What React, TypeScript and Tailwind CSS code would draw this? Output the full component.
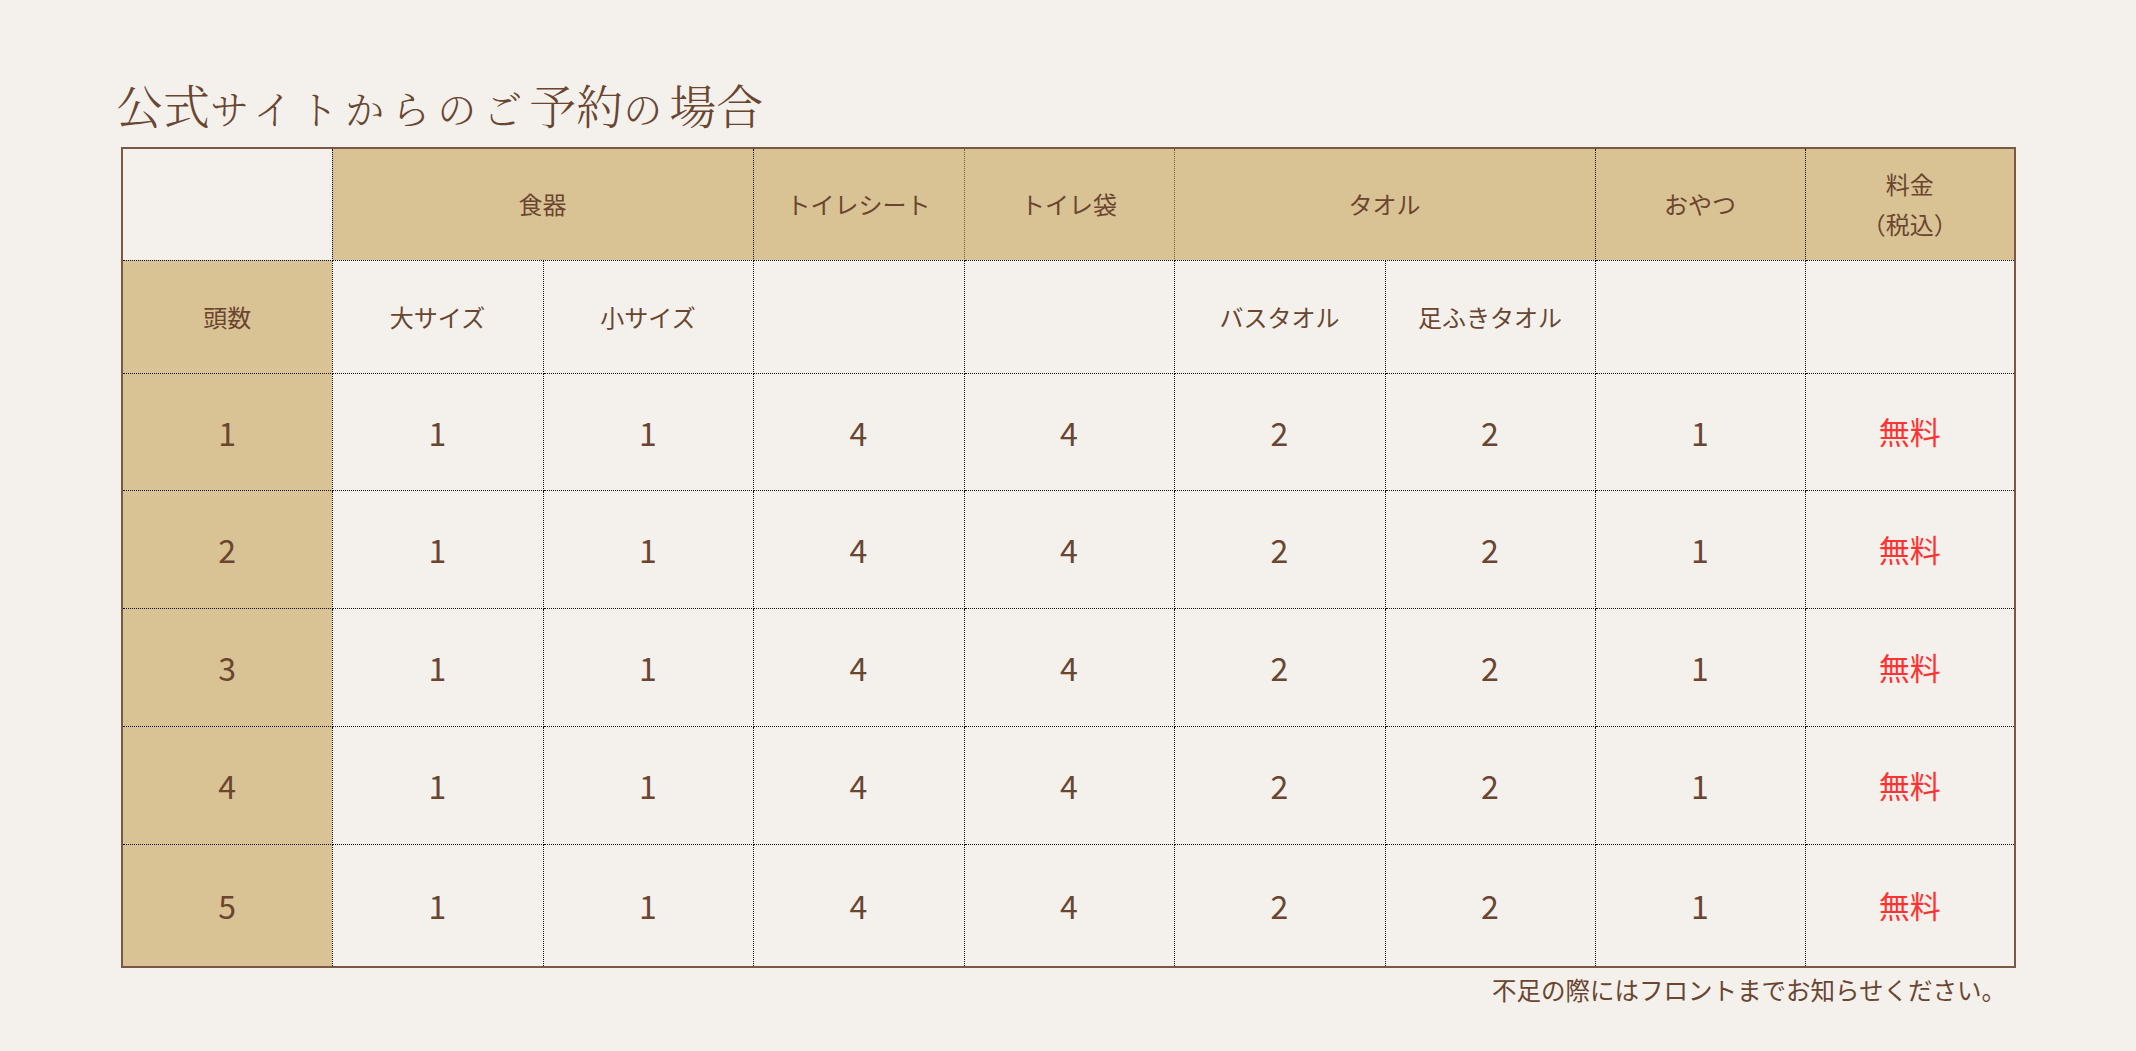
const cols = ["w-[210px]", "w-[211px]", "w-[210px]", "w-[211px]", "w-[210px]", "w-[211px]", "w-[210px]", "w-[210px]", "w-[210px]"];

const rows = [
  { n: 1, h: "h-[117px]" },
  { n: 2, h: "h-[118px]" },
  { n: 3, h: "h-[118px]" },
  { n: 4, h: "h-[118px]" },
  { n: 5, h: "h-[123px]" },
];

const values = [1, 1, 4, 4, 2, 2, 1];

const cell = "border border-dotted border-[#111111] text-center align-middle";
const head = "bg-[#d9c394]";

const K = ({ children }: { children: string }) => (
  <span className="text-[47px] tracking-[0px]">{children}</span>
);
const Kana = ({ children }: { children: string }) => (
  <span className="text-[39px] tracking-[7px]">{children}</span>
);

export default function App() {
  return (
    <div
      className="min-h-screen w-full bg-[#f4f1ec] text-[#6a4530] pl-[121px] pt-[80px]"
      style={{ fontFamily: '"Noto Sans CJK JP", "Noto Sans", sans-serif' }}
    >
      <h1
        className="leading-none font-light ml-[-5px] mb-[20px] h-[47px] flex items-end"
        style={{ fontFamily: '"Noto Serif CJK JP", "Noto Serif JP", "Noto Sans CJK JP", serif' }}
      >
        <K>公式</K>
        <Kana>サイトからのご</Kana>
        <K>予約</K>
        <Kana>の</Kana>
        <K>場合</K>
      </h1>

      <table className="table-fixed border-collapse w-[1893px] border-2 border-solid border-[#7a5843]">
        <colgroup>
          {cols.map((c, i) => (
            <col key={i} className={c} />
          ))}
        </colgroup>
        <tbody>
          <tr className="h-[112px] text-[24px]">
            <td className={`${cell}`}></td>
            <td className={`${cell} ${head}`} colSpan={2}>食器</td>
            <td className={`${cell} ${head} border-r-[#7a6040]`}>トイレシート</td>
            <td className={`${cell} ${head} border-r-[#7a6040]`}>トイレ袋</td>
            <td className={`${cell} ${head}`} colSpan={2}>タオル</td>
            <td className={`${cell} ${head}`}>おやつ</td>
            <td className={`${cell} ${head} leading-[40px]`}>
              料金
              <br />
              （税込）
            </td>
          </tr>
          <tr className="h-[113px] text-[24px]">
            <td className={`${cell} ${head}`}>頭数</td>
            <td className={cell}>大サイズ</td>
            <td className={cell}>小サイズ</td>
            <td className={cell}></td>
            <td className={cell}></td>
            <td className={cell}>バスタオル</td>
            <td className={cell}>足ふきタオル</td>
            <td className={cell}></td>
            <td className={cell}></td>
          </tr>
          {rows.map((r) => (
            <tr key={r.n} className={`${r.h} text-[32px]`}>
              <td className={`${cell} ${head}`}>{r.n}</td>
              {values.map((v, i) => (
                <td key={i} className={cell}>
                  {v}
                </td>
              ))}
              <td className={`${cell} text-[#ff3333] text-[31px]`}>無料</td>
            </tr>
          ))}
        </tbody>
      </table>

      <p className="w-[1893px] text-right pr-[8px] text-[24.5px] leading-none mt-[10px]">
        不足の際にはフロントまでお知らせください。
      </p>
    </div>
  );
}
